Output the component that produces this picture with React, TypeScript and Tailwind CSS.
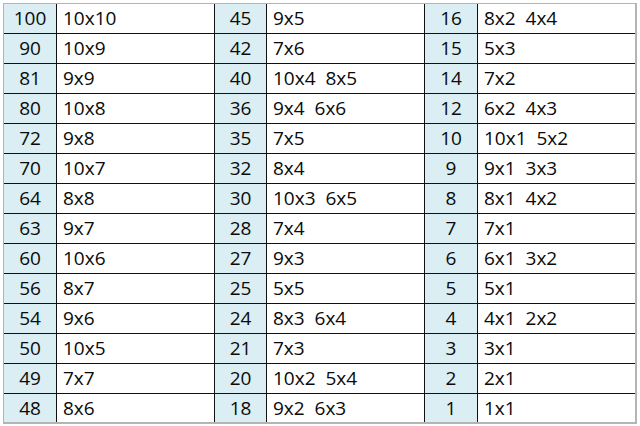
const groups: [string, string][][] = [
  [
    ["100", "10x10"],
    ["90", "10x9"],
    ["81", "9x9"],
    ["80", "10x8"],
    ["72", "9x8"],
    ["70", "10x7"],
    ["64", "8x8"],
    ["63", "9x7"],
    ["60", "10x6"],
    ["56", "8x7"],
    ["54", "9x6"],
    ["50", "10x5"],
    ["49", "7x7"],
    ["48", "8x6"],
  ],
  [
    ["45", "9x5"],
    ["42", "7x6"],
    ["40", "10x4  8x5"],
    ["36", "9x4  6x6"],
    ["35", "7x5"],
    ["32", "8x4"],
    ["30", "10x3  6x5"],
    ["28", "7x4"],
    ["27", "9x3"],
    ["25", "5x5"],
    ["24", "8x3  6x4"],
    ["21", "7x3"],
    ["20", "10x2  5x4"],
    ["18", "9x2  6x3"],
  ],
  [
    ["16", "8x2  4x4"],
    ["15", "5x3"],
    ["14", "7x2"],
    ["12", "6x2  4x3"],
    ["10", "10x1  5x2"],
    ["9", "9x1  3x3"],
    ["8", "8x1  4x2"],
    ["7", "7x1"],
    ["6", "6x1  3x2"],
    ["5", "5x1"],
    ["4", "4x1  2x2"],
    ["3", "3x1"],
    ["2", "2x1"],
    ["1", "1x1"],
  ],
];

export default function App() {
  const rows = groups[0].map((_, i) => i);

  return (
    <div
      className="h-[426px] w-[640px] bg-white pl-[3px] pt-[3px] text-[19px] text-[#0a0a0a]"
      style={{ fontFamily: '"Open Sans", "Liberation Sans", sans-serif' }}
    >
      <div className="w-[634px] border-b-2 border-l border-r-2 border-t border-[#b4b4b4]">
        {rows.map((i) => (
          <div
            key={i}
            className={
              i === rows.length - 1
                ? "flex h-[28px]"
                : "flex h-[30px] border-b border-[#111]"
            }
          >
            {/* group 1 */}
            <div className="flex w-[53px] items-center justify-center border-r border-[#111] bg-[#daeef3]">
              {groups[0][i][0]}
            </div>
            <div className="flex w-[158px] items-center whitespace-pre border-r border-[#111] pl-[6px]">
              {groups[0][i][1]}
            </div>
            {/* group 2 */}
            <div className="flex w-[52px] items-center justify-center border-r border-[#111] bg-[#daeef3]">
              {groups[1][i][0]}
            </div>
            <div className="flex w-[158px] items-center whitespace-pre border-r border-[#111] pl-[6px]">
              {groups[1][i][1]}
            </div>
            {/* group 3 */}
            <div className="flex w-[53px] items-center justify-center border-r border-[#111] bg-[#daeef3]">
              {groups[2][i][0]}
            </div>
            <div className="flex flex-1 items-center whitespace-pre pl-[6px]">
              {groups[2][i][1]}
            </div>
          </div>
        ))}
      </div>
    </div>
  );
}
